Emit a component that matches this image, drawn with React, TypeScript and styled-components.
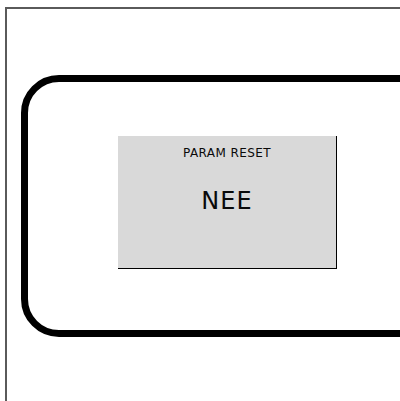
import React from "react";
import styled, { createGlobalStyle } from "styled-components";

const Global = createGlobalStyle`
  html, body { margin: 0; padding: 0; background: #ffffff; overflow: hidden; }
  body { width: 400px; height: 401px; font-family: "DejaVu Sans", sans-serif; }
`;

const Frame = styled.div`
  box-sizing: border-box;
  margin: 7px 0 0 5px;
  width: 395px;
  height: 394px;
  overflow: hidden;
  border-top: 2px solid #5a5a5a;
  border-left: 2px solid #5a5a5a;
  padding: 66px 0 0 14px;
`;

const Bezel = styled.div`
  box-sizing: border-box;
  width: 420px;
  height: 262px;
  border: 7px solid #000000;
  border-radius: 38px;
  padding: 54px 0 0 90px;
`;

const Panel = styled.div`
  box-sizing: border-box;
  width: 219px;
  height: 133px;
  background: #d9d9d9;
  border-right: 1px solid #000000;
  border-bottom: 1px solid #000000;
  display: flex;
  flex-direction: column;
  align-items: center;
  padding-top: 11px;
  color: #0a0a0a;
`;

const Title = styled.div`
  font-size: 12px;
  line-height: 12px;
  letter-spacing: 0.4px;
`;

const Value = styled.div`
  margin-top: 30px;
  font-size: 24px;
  line-height: 24px;
  letter-spacing: 1px;
`;

export default function App() {
  return (
    <>
      <Global />
      <Frame>
        <Bezel>
          <Panel>
            <Title>PARAM RESET</Title>
            <Value>NEE</Value>
          </Panel>
        </Bezel>
      </Frame>
    </>
  );
}
